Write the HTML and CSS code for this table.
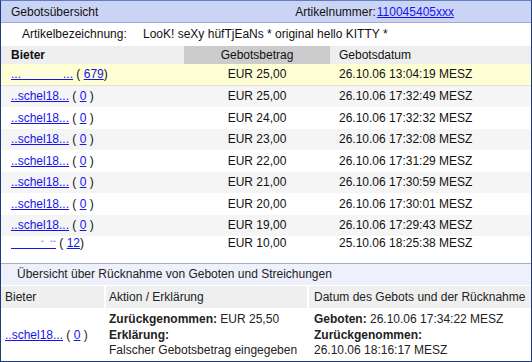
FILE: index.html
```html
<!DOCTYPE html>
<html lang="de">
<head>
<meta charset="utf-8">
<title>Gebotsübersicht</title>
<link rel="stylesheet" href="styles.css">
</head>
<body>
<div class="frame">
  <div class="hdr">
    <span class="hdr-title">Gebotsübersicht</span>
    <span class="artnr">Artikelnummer:<a href="#">110045405xxx</a></span>
  </div>
  <div class="desc">
    <span class="desc-lbl">Artikelbezeichnung:</span>
    <span>LooK! seXy hüfTjEaNs * original hello KITTY *</span>
  </div>

  <div class="bids">
    <div class="row head">
      <div class="c1 b">Bieter</div>
      <div class="c2 dark">Gebotsbetrag</div>
      <div class="c3">Gebotsdatum</div>
    </div>
    <div class="row top">
      <div class="c1"><a href="#">...<span class="red">xxxxxxx</span>...</a> ( <a href="#">679</a>)</div>
      <div class="c2">EUR 25,00</div>
      <div class="c3">26.10.06 13:04:19 MESZ</div>
    </div>
    <div class="row alt">
      <div class="c1"><a href="#">..schel18...</a> ( <a href="#">0</a> )</div>
      <div class="c2">EUR 25,00</div>
      <div class="c3">26.10.06 17:32:49 MESZ</div>
    </div>
    <div class="row">
      <div class="c1"><a href="#">..schel18...</a> ( <a href="#">0</a> )</div>
      <div class="c2">EUR 24,00</div>
      <div class="c3">26.10.06 17:32:32 MESZ</div>
    </div>
    <div class="row alt">
      <div class="c1"><a href="#">..schel18...</a> ( <a href="#">0</a> )</div>
      <div class="c2">EUR 23,00</div>
      <div class="c3">26.10.06 17:32:08 MESZ</div>
    </div>
    <div class="row">
      <div class="c1"><a href="#">..schel18...</a> ( <a href="#">0</a> )</div>
      <div class="c2">EUR 22,00</div>
      <div class="c3">26.10.06 17:31:29 MESZ</div>
    </div>
    <div class="row alt">
      <div class="c1"><a href="#">..schel18...</a> ( <a href="#">0</a> )</div>
      <div class="c2">EUR 21,00</div>
      <div class="c3">26.10.06 17:30:59 MESZ</div>
    </div>
    <div class="row">
      <div class="c1"><a href="#">..schel18...</a> ( <a href="#">0</a> )</div>
      <div class="c2">EUR 20,00</div>
      <div class="c3">26.10.06 17:30:01 MESZ</div>
    </div>
    <div class="row alt">
      <div class="c1"><a href="#">..schel18...</a> ( <a href="#">0</a> )</div>
      <div class="c2">EUR 19,00</div>
      <div class="c3">26.10.06 17:29:43 MESZ</div>
    </div>
    <div class="row last">
      <div class="c1"><a href="#"><span class="red">xxxxx</span><span class="mark">ˆ</span><span class="red">x</span><span class="mark">ˆˆ</span></a> ( <a href="#">12</a>)</div>
      <div class="c2">EUR 10,00</div>
      <div class="c3">25.10.06 18:25:38 MESZ</div>
    </div>
  </div>

  <div class="sec2">
    <div class="sec2-title">Übersicht über Rücknahme von Geboten und Streichungen</div>
    <div class="rtable">
      <div class="rh">Bieter</div>
      <div class="rh">Aktion / Erklärung</div>
      <div class="rh">Datum des Gebots und der Rücknahme</div>
      <div class="rd rd-bieter"><a href="#">..schel18...</a> ( <a href="#">0</a> )</div>
      <div class="rd">
        <div><b>Zurückgenommen:</b> EUR 25,50</div>
        <div><b>Erklärung:</b></div>
        <div>Falscher Gebotsbetrag eingegeben</div>
      </div>
      <div class="rd">
        <div><b>Geboten:</b> 26.10.06 17:34:22 MESZ</div>
        <div><b>Zurückgenommen:</b></div>
        <div>26.10.06 18:16:17 MESZ</div>
      </div>
    </div>
  </div>
</div>
</body>
</html>
```

FILE: styles.css
```css
html, body {
  margin: 0;
  padding: 0;
  background: #ffffff;
}

.frame {
  width: 532px;
  height: 362px;
  box-sizing: border-box;
  border: 1px solid #1c3c7c;
  border-top-color: #5f7fc0;
  font-family: "Liberation Sans", Arial, sans-serif;
  font-size: 12px;
  color: #111;
  overflow: hidden;
  background: #fff;
}

a {
  color: #1414ee;
  text-decoration: underline;
}

.hdr {
  height: 21px;
  border-bottom: 1px solid #9fabd6;
  background: #ccd4f5;
  display: flex;
  align-items: center;
  justify-content: space-between;
  padding: 0 77px 0 10px;
}

.artnr a {
  margin-left: 1px;
}

.desc {
  height: 23px;
  display: flex;
  align-items: center;
  padding-left: 21px;
  padding-bottom: 2px;
  box-sizing: border-box;
}

.desc-lbl {
  width: 121px;
}

.row {
  display: grid;
  grid-template-columns: 183px 146px 1fr;
  height: 21.5px;
  align-items: center;
  box-sizing: border-box;
}

.row > div {
  white-space: nowrap;
}

.c1 {
  padding-left: 10px;
}

.c2 {
  text-align: center;
}

.c3 {
  padding-left: 9px;
}

.row.head {
  height: 18px;
  background: #eeeeee;
}

.row.head > div {
  height: 100%;
  display: flex;
  align-items: center;
}

.row.head .c2 {
  justify-content: center;
}

.b {
  font-weight: bold;
}

.dark {
  background: #cccccc;
}

.row.top {
  background: #ffffd6;
  border-bottom: 1px solid #e2e2d6;
}

.row.alt {
  background: #f5f5f5;
}

.row.last {
  height: 13px;
  margin-bottom: 14px;
}

.red {
  color: transparent;
}

.top .red {
  color: #fbfbf0;
}

.mark {
  color: #7a7aee;
  font-size: 9px;
}

.sec2 {
  border-top: 1px solid #a9adbd;
}

.sec2-title {
  height: 21px;
  line-height: 21px;
  background: #eef0fb;
  padding-left: 16px;
  color: #222;
}

.rtable {
  margin-top: 1px;
  display: grid;
  grid-template-columns: 103px 201px 1fr;
  column-gap: 2px;
  background: #fff;
}

.rh {
  height: 22px;
  line-height: 22px;
  background: #efefef;
  padding-left: 4px;
  white-space: nowrap;
  color: #222;
}

.rh:nth-child(2) {
  padding-left: 3px;
}

.rh:nth-child(3) {
  padding-left: 5px;
}

.rd {
  padding-top: 4px;
  padding-left: 3px;
  line-height: 15.5px;
  white-space: nowrap;
  color: #222;
}

.rd:last-child {
  padding-left: 5px;
}

.rd-bieter {
  padding-left: 4px;
  padding-top: 0;
  align-self: center;
  margin-top: 4px;
}
```
